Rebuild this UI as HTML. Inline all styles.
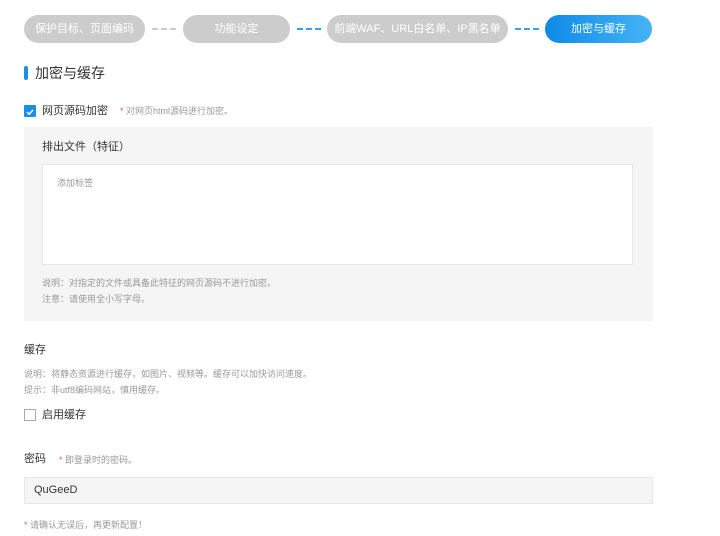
<!DOCTYPE html>
<html><head><meta charset="utf-8"><style>
*{margin:0;padding:0;box-sizing:border-box}
body{width:720px;height:536px;background:#fff;font-family:"Liberation Sans","Noto Sans CJK SC",sans-serif;color:#333;position:relative;overflow:hidden}
.a{position:absolute;white-space:nowrap}
.pill{position:absolute;top:15px;height:28px;border-radius:14px;background:#ccc;color:#fff;font-size:11px;line-height:28px;text-align:center}
.dash{position:absolute;top:28px;height:0;border-top:2px dashed #ccc}
.s{font-size:9px;color:#999}
.r{color:#f55}
</style></head><body>
<div class="pill" style="left:24px;width:121px">保护目标、页面编码</div>
<div class="dash" style="left:152px;width:24px"></div>
<div class="pill" style="left:183px;width:107px">功能设定</div>
<div class="dash" style="left:297px;width:24px;border-color:#3a9ff0"></div>
<div class="pill" style="left:327px;width:181px">前端WAF、URL白名单、IP黑名单</div>
<div class="dash" style="left:515px;width:24px;border-color:#3a9ff0"></div>
<div class="pill" style="left:545px;width:107px;background:linear-gradient(90deg,#0d8ae8,#45b4f7)">加密与缓存</div>

<div class="a" style="left:24px;top:66px;width:4px;height:14px;border-radius:2px;background:#1a8fe8"></div>
<div class="a" style="left:35px;top:64px;font-size:14px;line-height:18px">加密与缓存</div>

<div class="a" style="left:24px;top:105px;width:12px;height:12px;background:#1a8fe8;border-radius:1px"><svg width="12" height="12"><path d="M3 6.2 L5.2 8.2 L9 4" stroke="#fff" stroke-width="1.5" fill="none"/></svg></div>
<div class="a" style="left:42px;top:103px;font-size:11px;line-height:16px">网页源码加密</div>
<div class="a s" style="left:120px;top:104px;line-height:14px"><span class="r">*</span> 对网页html源码进行加密。</div>

<div class="a" style="left:24px;top:127px;width:629px;height:194px;background:#f5f5f5"></div>
<div class="a" style="left:42px;top:139px;font-size:11px;line-height:16px">排出文件（特征）</div>
<div class="a" style="left:42px;top:164px;width:591px;height:101px;background:#fff;border:1px solid #e6e6e6"></div>
<div class="a s" style="left:57px;top:176px">添加标签</div>
<div class="a s" style="left:42px;top:276px">说明：对指定的文件或具备此特征的网页源码不进行加密。</div>
<div class="a s" style="left:42px;top:292px">注意：请使用全小写字母。</div>

<div class="a" style="left:24px;top:342px;font-size:11px;line-height:16px">缓存</div>
<div class="a s" style="left:24px;top:367px">说明：将静态资源进行缓存，如图片、视频等。缓存可以加快访问速度。</div>
<div class="a s" style="left:24px;top:383px">提示：非utf8编码网站，慎用缓存。</div>
<div class="a" style="left:24px;top:409px;width:12px;height:12px;border:1px solid #aaa;background:#fff"></div>
<div class="a" style="left:42px;top:407px;font-size:11px;line-height:16px">启用缓存</div>

<div class="a" style="left:24px;top:451px;font-size:11px;line-height:16px">密码</div>
<div class="a s" style="left:59px;top:453px"><span class="r">*</span> 即登录时的密码。</div>
<div class="a" style="left:24px;top:477px;width:629px;height:27px;background:#f5f5f5;border:1px solid #e8e8e8;font-size:11px;line-height:25px;padding-left:9px">QuGeeD</div>
<div class="a s" style="left:24px;top:518px"><span class="r">*</span> 请确认无误后，再更新配置！</div>
</body></html>
